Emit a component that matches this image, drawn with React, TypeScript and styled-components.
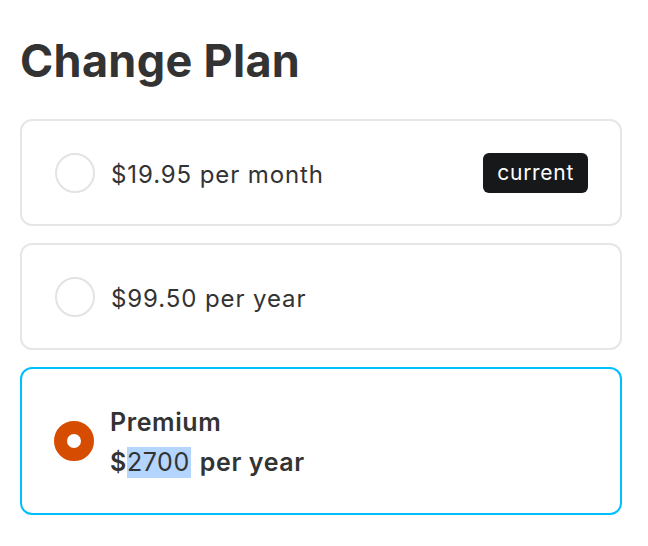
import React from "react";
import styled, { createGlobalStyle } from "styled-components";

const GlobalStyle = createGlobalStyle`
  body {
    margin: 0;
    background: #ffffff;
    font-family: Inter, "Noto Sans", sans-serif;
    color: #333333;
  }
`;

type Plan = {
  id: string;
  price: string;
  current?: boolean;
};

const plans: Plan[] = [
  { id: "monthly", price: "$19.95 per month", current: true },
  { id: "yearly", price: "$99.50 per year" },
];

const App = () => {
  return (
    <Wrapper>
      <GlobalStyle />
      <Title>Change Plan</Title>
      <PlanList>
        {plans.map((plan) => (
          <PlanCard key={plan.id}>
            <Radio />
            <PlanText>{plan.price}</PlanText>
            {plan.current && <Badge>current</Badge>}
          </PlanCard>
        ))}
        <PlanCard selected>
          <Radio selected />
          <PremiumText>
            <div>Premium</div>
            <div>
              $<Highlight>2700</Highlight>per year
            </div>
          </PremiumText>
        </PlanCard>
      </PlanList>
    </Wrapper>
  );
};

const Wrapper = styled.div`
  padding: 34px 26px 0 20px;
  width: 602px;
`;

const Title = styled.h1`
  margin: 0 0 31px 0;
  font-size: 45px;
  font-weight: 700;
  letter-spacing: 0.3px;
  line-height: 54px;
  color: #333333;
`;

const PlanList = styled.div`
  display: flex;
  flex-direction: column;
  gap: 17px;
`;

const PlanCard = styled.div<{ selected?: boolean }>`
  display: flex;
  align-items: center;
  box-sizing: border-box;
  height: ${(p) => (p.selected ? "148px" : "107px")};
  padding: 0 32px 0 ${(p) => (p.selected ? "32px" : "33px")};
  border: ${(p) => (p.selected ? "2px solid #00bfff" : "2px solid #e6e6e6")};
  border-radius: 12px;
  background: #ffffff;
`;

const Radio = styled.div<{ selected?: boolean }>`
  box-sizing: border-box;
  flex: none;
  width: 40px;
  height: 40px;
  border-radius: 50%;
  margin-right: 16px;
  border: ${(p) => (p.selected ? "13px solid #d64c00" : "2px solid #e3e3e3")};
  background: #ffffff;
`;

const PlanText = styled.div`
  flex: 1;
  padding-top: 3px;
  font-size: 24px;
  font-weight: 400;
  letter-spacing: 0.9px;
  color: #333333;
`;

const Badge = styled.div`
  background: #17181a;
  color: #ffffff;
  font-size: 21px;
  letter-spacing: 0.7px;
  line-height: 40px;
  padding: 0 14px;
  border-radius: 6px;
`;

const PremiumText = styled.div`
  display: flex;
  flex-direction: column;
  padding-top: 2px;
  font-size: 25px;
  font-weight: 600;
  letter-spacing: 0.6px;
  line-height: 40px;
  color: #333333;
`;

const Highlight = styled.span`
  display: inline-block;
  font-weight: 400;
  line-height: 31px;
  padding: 0 1px 0 0;
  margin-right: 9px;
  background: #b4d5fe;
`;

export default App;
